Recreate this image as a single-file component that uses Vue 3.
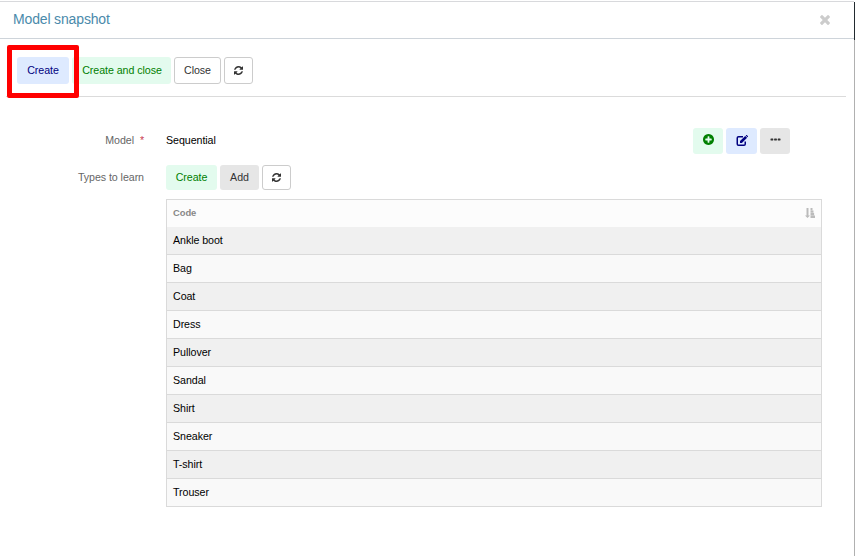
<script setup>
const types = ['Ankle boot', 'Bag', 'Coat', 'Dress', 'Pullover', 'Sandal', 'Shirt', 'Sneaker', 'T-shirt', 'Trouser']
const refreshPath = 'M1511 928q0 5-1 7-64 268-268 434.5t-478 166.5q-146 0-282.5-55t-243.5-157l-129 129q-19 19-45 19t-45-19-19-45v-448q0-26 19-45t45-19h448q26 0 45 19t19 45-19 45l-137 137q71 66 161 102t187 36q134 0 250-65t186-179q11-17 53-117 8-23 30-23h192q13 0 22.5 9.5t9.5 22.5zm25-800v448q0 26-19 45t-45 19h-448q-26 0-45-19t-19-45 19-45l138-138q-148-137-349-137-134 0-250 65t-186 179q-11 17-53 117-8 23-30 23h-199q-13 0-22.5-9.5t-9.5-22.5v-7q65-268 270-434.5t480-166.5q146 0 284 55.5t245 156.5l130-129q19-19 45-19t45 19 19 45z'
</script>

<template>
  <div class="window">
    <section class="modal">
      <header class="modal-header">
        <h1>Model snapshot</h1>
        <svg class="close" viewBox="302 366 1188 1188"><path d="M1490 1322q0 40-28 68l-136 136q-28 28-68 28t-68-28l-294-294-294 294q-28 28-68 28t-68-28l-136-136q-28-28-28-68t28-68l294-294-294-294q-28-28-28-68t28-68l136-136q28-28 68-28t68 28l294 294 294-294q28-28 68-28t68 28l136 136q28 28 28 68t-28 68l-294 294 294 294q28 28 28 68z" /></svg>
      </header>

      <div class="toolbar">
        <button class="btn blue create">Create</button>
        <button class="btn green create-close">Create and close</button>
        <button class="btn outline close-btn">Close</button>
        <button class="btn outline icon-btn"><svg class="refresh" viewBox="0 0 1536 1536"><path :d="refreshPath" /></svg></button>
        <div class="highlight"></div>
      </div>

      <div class="field model">
        <label>Model <span class="required">*</span></label>
        <span class="value">Sequential</span>
        <div class="actions">
          <button class="btn green"><svg class="plus" viewBox="128 128 1536 1536"><path d="M1344 960v-128q0-26-19-45t-45-19h-256v-256q0-26-19-45t-45-19h-128q-26 0-45 19t-19 45v256h-256q-26 0-45 19t-19 45v128q0 26 19 45t45 19h256v256q0 26 19 45t45 19h128q26 0 45-19t19-45v-256h256q26 0 45-19t19-45zm320-64q0 209-103 385.5t-279.5 279.5-385.5 103-385.5-103-279.5-279.5-103-385.5 103-385.5 279.5-279.5 385.5-103 385.5 103 279.5 279.5 103 385.5z" /></svg></button>
          <button class="btn blue edit-btn"><svg class="edit" viewBox="0 0 12 11"><path class="frame" d="M7 1.75H2.5Q1.25 1.75 1.25 3V9Q1.25 10.25 2.5 10.25H8Q9.25 10.25 9.25 9V6.5" /><path d="M4 8V6.1L9.2.9l1.9 1.9L5.9 8zM9.7.5l.5-.5h.6L12 1.200V1.700l-.5.6z" /></svg></button>
          <button class="btn gray"><svg class="dots" viewBox="0 0 11 3"><rect x=".5" y=".5" width="2.8" height="2" rx=".4" /><rect x="4.1" y=".5" width="2.800" height="2" rx=".4" /><rect x="7.7" y=".5" width="2.8" height="2" rx=".4" /></svg></button>
        </div>
      </div>

      <div class="field types">
        <label>Types to learn</label>
        <div class="list">
          <div class="list-tools">
            <button class="btn green add-create">Create</button>
            <button class="btn gray add">Add</button>
            <button class="btn outline icon-btn"><svg class="refresh" viewBox="0 0 1536 1536"><path :d="refreshPath" /></svg></button>
          </div>
          <div class="table">
            <div class="thead">
              <span>Code</span>
              <svg class="sort" viewBox="0 0 10 10"><path d="M1.500 0h2v7.500H5L2.500 10 0 7.500h1.500zM5.500 0h2v2.200h-2zM5.500 2.500h3v2.200h-3zM5.500 5h3.600v2.200H5.500zM5.500 7.600H10V10H5.500z" /></svg>
            </div>
            <div v-for="t in types" :key="t" class="row">{{ t }}</div>
          </div>
        </div>
      </div>
    </section>
    <div class="backdrop"><i></i></div>
  </div>
</template>

<style>
body { background: #fff; overflow: hidden; }
</style>

<style scoped>
* { box-sizing: border-box; }
.window { display: flex; height: 556px; padding-top: 1px; font: 10.67px/14px "Liberation Sans", Arial, sans-serif; letter-spacing: -0.06px; color: #000; }
.modal { width: 854px; border-top: 1px solid #d8d9dc; }
.backdrop { width: 1px; margin-top: 1px; background: #b0b0b0; }
.backdrop i { display: block; height: 38px; background: #222a2f; }
svg { display: block; fill: currentColor; }
.modal-header { display: flex; justify-content: space-between; align-items: center; height: 37px; padding: 0 24px 2px 13px; border-bottom: 1px solid #ced4da; }
h1 { margin: 0; font-size: 14px; font-weight: 400; letter-spacing: -0.15px; color: #4a8aab; line-height: 18px; }
.close { width: 10px; height: 10px; color: #ccc; margin-top: 1px; }
.toolbar { position: relative; display: flex; gap: 3px; height: 58px; margin: 0 8px 0 6px; padding: 18px 0 0 11px; border-bottom: 1px solid #dbdbdb; }
.btn { display: flex; align-items: center; justify-content: center; height: 27px; padding: 0 0 2px; border: 0; border-radius: 3px; font: inherit; letter-spacing: inherit; white-space: nowrap; }
.blue { background: #deeaff; color: #000080; }
.green { background: #e3fbee; color: #008000; }
.gray { background: #e6e6e6; color: #333; }
.outline { background: #fff; border: 1px solid #ccc; color: #333; }
.create { width: 52px; }
.create-close { width: 99px; padding-left: 1px; }
.close-btn { width: 47px; }
.icon-btn { width: 29px; padding-bottom: 0; }
.refresh { width: 9px; height: 9px; }
.highlight { position: absolute; left: 1px; top: 6px; width: 72px; height: 53px; border: 5px solid #f00; border-radius: 2px; }
.field { display: flex; }
label { width: 144px; text-align: right; color: #666; }
.model { height: 26px; margin-top: 31px; align-items: center; }
.model label, .value { padding-bottom: 2px; }
.required { color: #c93a50; margin-left: 3px; }
.value { margin-left: 22px; }
.actions { display: flex; gap: 3px; margin-left: auto; margin-right: 64px; }
.actions .btn { width: 30px; height: 26px; padding-bottom: 2px; }
.actions .edit-btn { width: 31px; padding-left: 1px; }
.plus { width: 11px; height: 11px; margin-bottom: 1px; }
.edit { width: 12px; height: 11px; }
.frame { fill: none; stroke: currentColor; stroke-width: 1.5; }
.dots { width: 11px; height: 3px; margin-bottom: 1px; }
.types { margin-top: 11px; }
.types label { padding-top: 5px; }
.list { width: 656px; margin-left: 22px; }
.list-tools { display: flex; gap: 3px; }
.list-tools .btn { height: 25px; }
.add-create { width: 51px; }
.add { width: 39px; }
.table { margin-top: 9px; border: 1px solid #dadada; }
.thead { display: flex; align-items: center; justify-content: space-between; height: 27px; padding: 0 6px 1px; background: #fcfcfc; color: #888; font-size: 9.4px; font-weight: 700; }
.sort { width: 10px; height: 10px; color: #bbb; }
.row { height: 28px; padding: 6px; border-bottom: 1px solid #dadada; background: #f0f0f0; }
.row:nth-child(odd) { background: #f9f9f9; }
.row:last-child { height: 27px; border-bottom: 0; }
</style>
